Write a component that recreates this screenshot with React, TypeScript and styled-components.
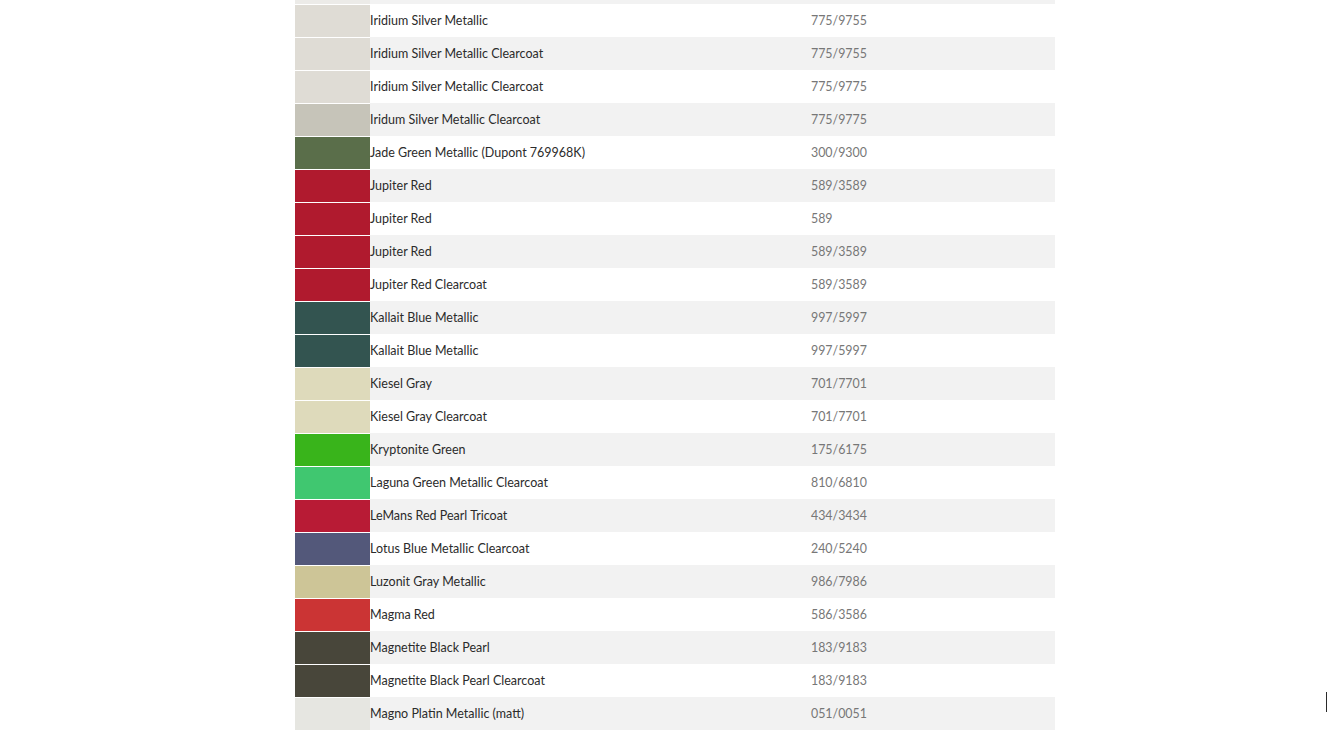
import React from "react";
import styled, { createGlobalStyle } from "styled-components";

const Global = createGlobalStyle`
  html, body { margin: 0; padding: 0; background: #ffffff; overflow: hidden; }
  body { font-family: Lato, "Open Sans", Arial, sans-serif; }
`;

const Page = styled.div`
  position: relative;
  width: 1328px;
  height: 731px;
  overflow: hidden;
  background: #ffffff;
`;

const Table = styled.div`
  width: 760px;
  margin-left: 295px;
  margin-top: -29px;
  display: flex;
  flex-direction: column;
`;

const Row = styled.div<{ $alt: boolean }>`
  display: grid;
  grid-template-columns: 75px 441px 1fr;
  height: 33px;
  align-items: center;
  background: ${(p) => (p.$alt ? "#f2f2f2" : "#ffffff")};
`;

const Swatch = styled.div<{ $color: string }>`
  align-self: stretch;
  border-top: 1px solid #ffffff;
  background: ${(p) => p.$color};
`;

const Name = styled.span`
  font-size: 12.5px;
  color: #2b2b2b;
  white-space: nowrap;
`;

const Code = styled.span`
  font-size: 12.4px;
  color: #777777;
  white-space: nowrap;
`;

const Caret = styled.div`
  position: absolute;
  left: 1326px;
  top: 692px;
  width: 1px;
  height: 20px;
  background: #2a2a2a;
`;

const rows: { name: string; code: string; color: string }[] = [
  { name: "", code: "", color: "#ecebe8" },
  { name: "Iridium Silver Metallic", code: "775/9755", color: "#dfdcd5" },
  { name: "Iridium Silver Metallic Clearcoat", code: "775/9755", color: "#dfdcd5" },
  { name: "Iridium Silver Metallic Clearcoat", code: "775/9775", color: "#dfdcd5" },
  { name: "Iridum Silver Metallic Clearcoat", code: "775/9775", color: "#c6c4b9" },
  { name: "Jade Green Metallic (Dupont 769968K)", code: "300/9300", color: "#5a6e4a" },
  { name: "Jupiter Red", code: "589/3589", color: "#b01a2e" },
  { name: "Jupiter Red", code: "589", color: "#b01a2e" },
  { name: "Jupiter Red", code: "589/3589", color: "#b01a2e" },
  { name: "Jupiter Red Clearcoat", code: "589/3589", color: "#b01a2e" },
  { name: "Kallait Blue Metallic", code: "997/5997", color: "#335450" },
  { name: "Kallait Blue Metallic", code: "997/5997", color: "#335450" },
  { name: "Kiesel Gray", code: "701/7701", color: "#dedabb" },
  { name: "Kiesel Gray Clearcoat", code: "701/7701", color: "#dedabb" },
  { name: "Kryptonite Green", code: "175/6175", color: "#39b41b" },
  { name: "Laguna Green Metallic Clearcoat", code: "810/6810", color: "#40c770" },
  { name: "LeMans Red Pearl Tricoat", code: "434/3434", color: "#b81b35" },
  { name: "Lotus Blue Metallic Clearcoat", code: "240/5240", color: "#53587a" },
  { name: "Luzonit Gray Metallic", code: "986/7986", color: "#cdc597" },
  { name: "Magma Red", code: "586/3586", color: "#cb3434" },
  { name: "Magnetite Black Pearl", code: "183/9183", color: "#48463a" },
  { name: "Magnetite Black Pearl Clearcoat", code: "183/9183", color: "#48463a" },
  { name: "Magno Platin Metallic (matt)", code: "051/0051", color: "#e6e6e1" },
];

export default function App() {
  return (
    <Page>
      <Global />
      <Table>
        {rows.map((r, i) => (
          <Row key={i} $alt={i % 2 === 0}>
            <Swatch $color={r.color} />
            <Name>{r.name}</Name>
            <Code>{r.code}</Code>
          </Row>
        ))}
      </Table>
      <Caret />
    </Page>
  );
}
